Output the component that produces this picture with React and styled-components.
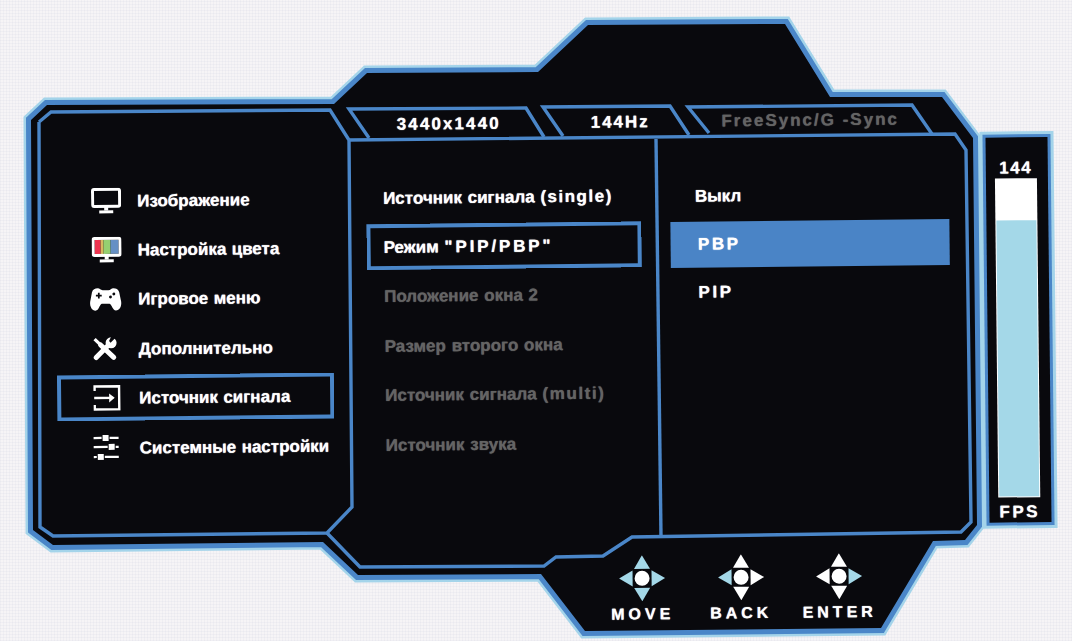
import React from "react";
import styled, { createGlobalStyle } from "styled-components";

const BLUE = "#4a86c8";
const LIGHT = "#a4d4ea";
const INK = "#09090d";
const CYAN = "#a4d8e8";
const DIM = "#646464";

const Global = createGlobalStyle`
  html, body { margin: 0; padding: 0; background: #f3f1f4; }
  #root { width: 1072px; height: 641px; overflow: hidden; }
`;

const Stage = styled.div`
  position: relative;
  width: 1072px;
  height: 641px;
  overflow: hidden;
  background-color: #f6f4f6;
  background-image:
    repeating-linear-gradient(0deg, rgba(190,195,215,.12) 0 1px, transparent 1px 3px),
    repeating-linear-gradient(90deg, rgba(190,195,215,.12) 0 1px, transparent 1px 3px);
  font-family: "Liberation Sans", Arial, sans-serif;
  font-weight: 700;
  color: #fff;
  text-shadow: 0 0 1px currentColor;
`;

const FrameArt = styled.svg`
  position: absolute;
  inset: 0;
  width: 1072px;
  height: 641px;
`;

const Osd = styled.div`
  position: relative;
  box-sizing: border-box;
  width: 1100px;
  height: 641px;
  padding: 115px 0 0 53px;
  display: grid;
  grid-template-columns: 311.4px 304px 316px 62px;
  grid-template-rows: 28px 419px auto;
  transform: rotate(-0.6deg);
  transform-origin: 0 0;
`;

const Tabs = styled.div`
  grid-column: 2 / 4;
  grid-row: 1;
  display: flex;
`;

const Tab = styled.div`
  width: ${(p) => p.$w}px;
  display: flex;
  align-items: center;
  justify-content: center;
  font-size: 17px;
  letter-spacing: ${(p) => p.$ls}px;
  color: ${(p) => (p.$dim ? DIM : "#fff")};
  white-space: nowrap;
`;

const Column = styled.div`
  grid-row: 2;
  display: flex;
  flex-direction: column;
  align-items: flex-start;
  padding-top: ${(p) => p.$top}px;
  gap: ${(p) => p.$gap}px;
`;

const NavRow = styled.div`
  box-sizing: border-box;
  width: 277px;
  height: 46px;
  display: flex;
  align-items: center;
  padding: 2px 0 0 36px;
  font-size: 17px;
  word-spacing: 0.6px;
  white-space: nowrap;
  box-shadow: ${(p) => (p.$on ? `inset 0 0 0 4px ${BLUE}` : "none")};
`;

const IconSlot = styled.div`
  width: 46px;
  flex: none;
  display: flex;
  align-items: center;
  text-shadow: none;
  margin-top: -2px;
`;

const IconNudge = styled.div`
  display: flex;
  margin-left: ${(p) => p.$x || 0}px;
`;

const MenuRow = styled.div`
  box-sizing: border-box;
  width: 275px;
  height: 46px;
  display: flex;
  align-items: center;
  padding: 2px 0 0 16.6px;
  font-size: 17px;
  word-spacing: 1px;
  white-space: pre;
  color: ${(p) => (p.$dim ? DIM : "#fff")};
  box-shadow: ${(p) => (p.$on ? `inset 0 0 0 4px ${BLUE}` : "none")};
`;

const Caps = styled.span`
  letter-spacing: ${(p) => p.$ls}px;
`;

const OptionRow = styled.div`
  box-sizing: border-box;
  width: 279px;
  height: 46px;
  display: flex;
  align-items: center;
  padding-left: ${(p) => p.$pad}px;
  font-size: 17px;
  letter-spacing: ${(p) => p.$ls}px;
  background: ${(p) => (p.$on ? "#4a84c6" : "transparent")};
`;

const FpsPanel = styled.div`
  grid-row: 2;
  box-sizing: border-box;
  margin-top: 4.7px;
  height: 385.3px;
  background: ${INK};
  box-shadow: 0 0 0 3px ${BLUE}, 0 0 0 6px ${LIGHT};
  display: flex;
  flex-direction: column;
  align-items: center;
  padding-top: 21px;
`;

const FpsValue = styled.div`
  height: 20px;
  line-height: 20px;
  font-size: 17px;
  letter-spacing: 1.6px;
  margin-left: -3px;
`;

const FpsTrack = styled.div`
  width: 42px;
  height: 319px;
  margin-left: -2px;
  background: #fff;
  display: flex;
  align-items: flex-end;
  padding: 0 1px 1px;
  box-sizing: border-box;
`;

const FpsFill = styled.div`
  width: 100%;
  background: ${CYAN};
`;

const FpsLabel = styled.div`
  margin: 5px 0 0 -2px;
  font-size: 17px;
  letter-spacing: 2.6px;
`;

const Footer = styled.div`
  grid-column: 1 / -1;
  grid-row: 3;
  display: flex;
  padding-left: 534px;
`;

const Control = styled.div`
  width: 98.5px;
  display: flex;
  flex-direction: column;
  align-items: center;
  font-size: 16px;
  letter-spacing: 4px;
`;

const ControlLabel = styled.div`
  margin-top: 4px;
  line-height: 18px;
  white-space: nowrap;
`;

const Poly = ({ p, w = 3.4, c = BLUE }) => (
  <polyline points={p} fill="none" stroke={c} strokeWidth={w} strokeLinejoin="miter" />
);

const OUTER =
  "31,120 47,105 334,104 367,73 538,72 588,25 785,24 830,97 942,97 973,138 977,525 965,540 933,541 881,628 585,631 541,574 358,575 323,542 53,545 33,530";

const Frame = () => (
  <FrameArt viewBox="0 0 1072 641">
    <polygon points={OUTER} fill="none" stroke={LIGHT} strokeWidth="15" strokeLinejoin="miter" />
    <polygon points={OUTER} fill="none" stroke={BLUE} strokeWidth="10" strokeLinejoin="miter" />
    <polygon points={OUTER} fill={INK} />
    <Poly p="39,122 51,112 330,110 349,140 352,507 327,533 53,536 40,527 39,122" />
    <Poly p="349,140 955,134 966,150 971,522 961,532 632,537 603,556 556,557 544,566 360,567 327,533" />
    <Poly p="656,139 661,536" />
    <Poly p="369,138 349,109 526,108 544,137" />
    <Poly p="563,136 543,107 670,106 689,135" />
    <Poly p="709,133 688,107 912,105 932,134" />
  </FrameArt>
);

const Monitor = ({ colored }) => (
  <svg width="30" height="26" viewBox="0 0 30 26">
    {colored && (
      <g>
        <rect x="3" y="3" width="6" height="14" fill="#ee3450" />
        <rect x="9" y="3" width="3" height="14" fill="#d8b860" />
        <rect x="12" y="3" width="7" height="14" fill="#95d070" />
        <rect x="19" y="3" width="8" height="14" fill="#6690c4" />
      </g>
    )}
    <rect x="1.5" y="1.5" width="27" height="17" rx="1.5" fill="none" stroke="#fff" strokeWidth="3" />
    <rect x="13" y="19" width="4" height="3.5" fill="#fff" />
    <rect x="8" y="22.5" width="14" height="3" fill="#fff" />
  </svg>
);

const Gamepad = () => (
  <svg width="33" height="25" viewBox="-1 0 34 25">
    <path
      d="M8 1C5 1 3 2 2 5L0 15C-.5 20 2 24 5.500 24C9 24 9.500 18 12 17H20C22.500 18 23 24 26.500 24C30 24 32.500 20 32 15L30 5C29 2 27 1 24 1C22 1 21 3 19 3H13C11 3 10 1 8 1Z"
      fill="#fff"
    />
    <path d="M9 5.500V11.500M6 8.500H12" stroke={INK} strokeWidth="1.800" />
    <circle cx="21" cy="10" r="1.500" fill={INK} />
    <circle cx="24.500" cy="7" r="1.500" fill={INK} />
  </svg>
);

const Tools = () => (
  <svg width="27" height="24" viewBox="0 0 27 24">
    <path d="M3 2L9 8" stroke="#fff" strokeWidth="3.200" />
    <path d="M9 8L22 20.500" stroke="#fff" strokeWidth="5" strokeLinecap="round" />
    <path d="M4.500 20.500L17 8" stroke="#fff" strokeWidth="5" strokeLinecap="round" />
    <circle cx="19.500" cy="6" r="5.500" fill="#fff" />
    <path d="M19 6L25 0H19.500L17.500 4Z" fill={INK} />
  </svg>
);

const InputIcon = () => (
  <svg width="28" height="26" viewBox="0 0 28 26" fill="none" stroke="#fff" strokeWidth="2.400">
    <path d="M1.500 6V1.500H26V24.500H1.500V20" />
    <path d="M1 13H20" />
    <path d="M16 8.500L21.500 13L16 17.500Z" fill="#fff" stroke="none" />
  </svg>
);

const Sliders = () => (
  <svg width="27" height="25" viewBox="0 0 27 25">
    <g stroke="#fff" strokeWidth="2.200">
      <path d="M1 3H9M17 3H26" />
      <path d="M1 12H15M23 12H26" />
      <path d="M1 22H4M12 22H26" />
    </g>
    <g fill="#fff">
      <rect x="10" y="0" width="6" height="6" />
      <rect x="16" y="9" width="6" height="6" />
      <rect x="5" y="19" width="6" height="6" />
    </g>
  </svg>
);

const Dpad = ({ active }) => {
  const c = (k) => (active.includes(k) ? CYAN : "#fff");
  return (
    <svg width="46" height="46" viewBox="0 0 46 46">
      <path d="M23 0L15 13.500H31Z" fill={c("up")} />
      <path d="M23 46L15 32.500H31Z" fill={c("down")} />
      <path d="M0 23L13.500 15V31Z" fill={c("left")} />
      <path d="M46 23L32.500 15V31Z" fill={c("right")} />
      <circle cx="23" cy="23" r="7.500" fill="#fff" />
    </svg>
  );
};

const NAV = [
  [<Monitor key="m" />, "Изображение", false, 0],
  [<Monitor key="c" colored />, "Настройка цвета", false, 0],
  [<Gamepad key="g" />, "Игровое меню", false, -3],
  [<Tools key="t" />, "Дополнительно", false, -1],
  [<InputIcon key="i" />, "Источник сигнала", true, 0],
  [<Sliders key="s" />, "Системные настройки", false, -1],
];

export default function App() {
  return (
    <Stage>
      <Global />
      <Frame />
      <Osd>
        <Tabs>
          <Tab $w={166} $ls={2.1}>3440x1440</Tab>
          <Tab $w={177} $ls={2}>144Hz</Tab>
          <Tab $w={203} $ls={2} $dim>FreeSync/G -Sync</Tab>
        </Tabs>
        <Column $gap={3.4} $top={35.6}>
          {NAV.map(([icon, label, on, x]) => (
            <NavRow key={label} $on={on}>
              <IconSlot>
                <IconNudge $x={x}>{icon}</IconNudge>
              </IconSlot>
              {label}
            </NavRow>
          ))}
        </Column>
        <Column $gap={3.4} $top={35.6}>
          <MenuRow>Источник сигнала <Caps $ls={1.5}>(single)</Caps></MenuRow>
          <MenuRow $on>Режим <Caps $ls={2.85}>"PIP/PBP"</Caps></MenuRow>
          <MenuRow $dim>Положение окна 2</MenuRow>
          <MenuRow $dim>Размер второго окна</MenuRow>
          <MenuRow $dim>Источник сигнала <Caps $ls={1.6}>(multi)</Caps></MenuRow>
          <MenuRow $dim>Источник звука</MenuRow>
        </Column>
        <Column $gap={2} $top={37.6}>
          <OptionRow $pad={24.5} $ls={0}>Выкл</OptionRow>
          <OptionRow $on $pad={27} $ls={2.6}>PBP</OptionRow>
          <OptionRow $pad={27} $ls={2.6}>PIP</OptionRow>
        </Column>
        <FpsPanel>
          <FpsValue>144</FpsValue>
          <FpsTrack>
            <FpsFill style={{ height: `${(144 / 166) * 100}%` }} />
          </FpsTrack>
          <FpsLabel>FPS</FpsLabel>
        </FpsPanel>
        <Footer>
          <Control>
            <Dpad active={["up", "down", "left", "right"]} />
            <ControlLabel>MOVE</ControlLabel>
          </Control>
          <Control>
            <Dpad active={["left"]} />
            <ControlLabel>BACK</ControlLabel>
          </Control>
          <Control>
            <Dpad active={["right"]} />
            <ControlLabel>ENTER</ControlLabel>
          </Control>
        </Footer>
      </Osd>
    </Stage>
  );
}
